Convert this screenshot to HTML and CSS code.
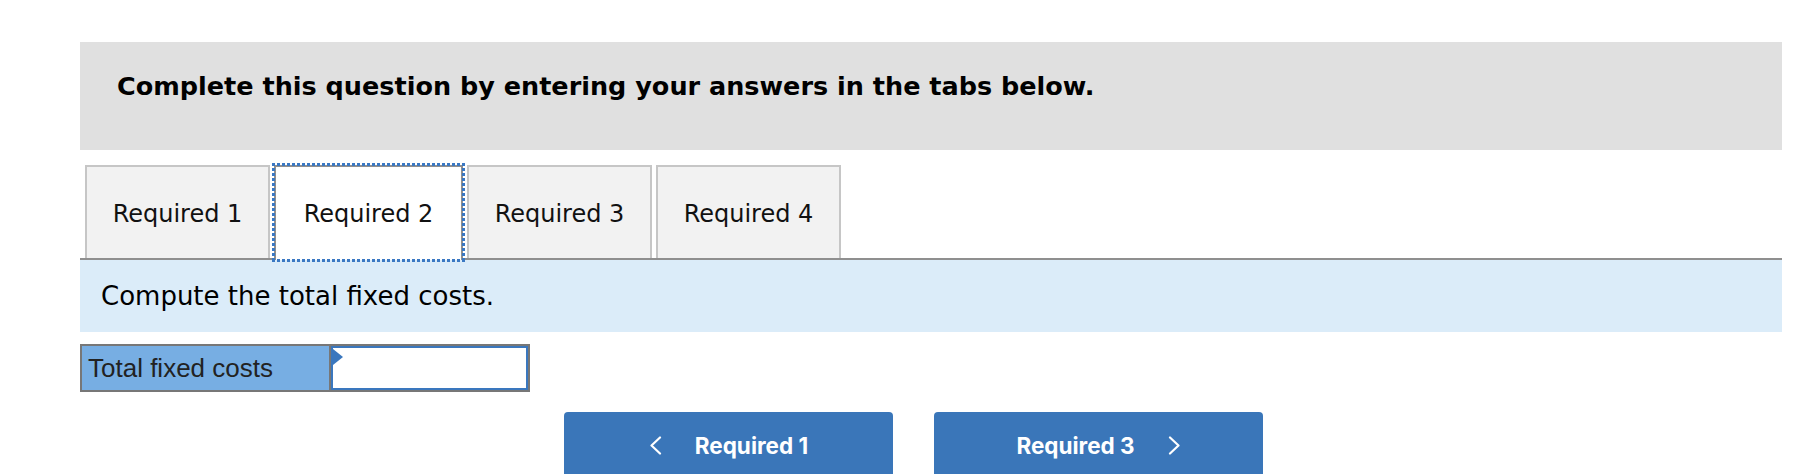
FILE: index.html
```html
<!DOCTYPE html>
<html lang="en">
<head>
<meta charset="utf-8">
<title>Required 2</title>
<link rel="stylesheet" href="styles.css">
</head>
<body>
<div class="wrap">
  <div class="instructions">
    <h2 class="instructions-text">Complete this question by entering your answers in the tabs below.</h2>
  </div>

  <div class="tabs">
    <div class="tab">Required 1</div>
    <div class="tab tab-active">Required 2</div>
    <div class="tab">Required 3</div>
    <div class="tab">Required 4</div>
  </div>

  <div class="prompt">Compute the total fixed costs.</div>

  <table class="answer">
    <tr>
      <td class="answer-label">Total fixed costs</td>
      <td class="answer-cell"><div class="answer-input"><span class="flag"></span></div></td>
    </tr>
  </table>

  <div class="nav">
    <div class="nav-btn">
      <svg class="chev" width="13" height="19" viewBox="0 0 13 19"><polyline points="11,1.5 2.5,9.5 11,17.5" fill="none" stroke="#fff" stroke-width="2.2" stroke-linecap="round" stroke-linejoin="round"/></svg>
      <span>Required 1</span>
    </div>
    <div class="nav-btn">
      <span>Required 3</span>
      <svg class="chev" width="13" height="19" viewBox="0 0 13 19"><polyline points="2,1.5 10.5,9.5 2,17.5" fill="none" stroke="#fff" stroke-width="2.2" stroke-linecap="round" stroke-linejoin="round"/></svg>
    </div>
  </div>
</div>
</body>
</html>
```

FILE: styles.css
```css
html, body {
  margin: 0;
  padding: 0;
  background: #ffffff;
  overflow: hidden;
}

body {
  font-family: "DejaVu Sans", Verdana, sans-serif;
  color: #000;
}

.wrap {
  margin-left: 80px;
  width: 1702px;
  padding-top: 42px;
}

.instructions {
  background: #e0e0e0;
  height: 108px;
  box-sizing: border-box;
  padding: 28px 0 0 37px;
}

.instructions-text {
  margin: 0;
  font-size: 25.5px;
  font-weight: bold;
  line-height: 32px;
}

.tabs {
  display: flex;
  gap: 4px;
  margin-top: 15px;
  padding-left: 5px;
  border-bottom: 2px solid #8f8f8f;
  height: 93px;
}

.tab {
  width: 185px;
  box-sizing: border-box;
  border: 2px solid #c6c6c6;
  border-bottom: none;
  background: #f2f2f2;
  display: flex;
  align-items: center;
  justify-content: center;
  font-size: 24px;
  color: #111;
  padding-top: 2px;
}

.tab-active {
  width: 189px;
  background: #ffffff;
  border-color: #8f8f8f;
  height: 95px;
  padding-bottom: 2px;
  position: relative;
  z-index: 1;
}

.tab-active::before {
  content: "";
  position: absolute;
  left: -4px;
  right: -4px;
  top: -4px;
  bottom: -2px;
  background:
    linear-gradient(to right, #3a78c3 60%, transparent 60%) top left / 5px 3px repeat-x,
    linear-gradient(to right, #3a78c3 60%, transparent 60%) bottom left / 5px 3px repeat-x,
    linear-gradient(to bottom, #3a78c3 60%, transparent 60%) top left / 3px 5px repeat-y,
    linear-gradient(to bottom, #3a78c3 60%, transparent 60%) top right / 3px 5px repeat-y;
  pointer-events: none;
}

.prompt {
  background: #dbecf9;
  height: 72px;
  box-sizing: border-box;
  padding: 20px 0 0 21px;
  font-size: 26px;
  line-height: 32px;
}

.answer {
  margin-top: 12px;
  border-collapse: collapse;
  border: 2px solid #777777;
  font-family: "Liberation Sans", Arial, sans-serif;
}

.answer td {
  padding: 0;
  height: 44px;
}

.answer-label {
  width: 249px;
  background: #77aee3;
  color: #222222;
  font-size: 26px;
  padding-left: 6px !important;
  box-sizing: border-box;
  border-right: 2px solid #777777;
}

.answer-cell {
  width: 197px;
  background: #ffffff;
  vertical-align: top;
}

.answer-input {
  height: 44px;
  box-sizing: border-box;
  border: 2px solid #3a77be;
  position: relative;
}

.flag {
  position: absolute;
  left: 0;
  top: 1px;
  width: 0;
  height: 0;
  border-top: 8px solid transparent;
  border-bottom: 8px solid transparent;
  border-left: 10px solid #3a77be;
}

.nav {
  display: flex;
  justify-content: center;
  gap: 41px;
  padding-right: 35px;
  margin-top: 20px;
}

.nav-btn {
  width: 329px;
  height: 70px;
  background: #3a76b9;
  border-radius: 4px;
  display: flex;
  justify-content: center;
  align-items: flex-start;
  gap: 33px;
  padding-top: 22px;
  box-sizing: border-box;
  color: #ffffff;
  font-family: Inter, "Noto Sans", sans-serif;
  font-weight: bold;
  font-size: 22.5px;
  line-height: 24px;
}

.chev {
  margin-top: 2px;
}
```
